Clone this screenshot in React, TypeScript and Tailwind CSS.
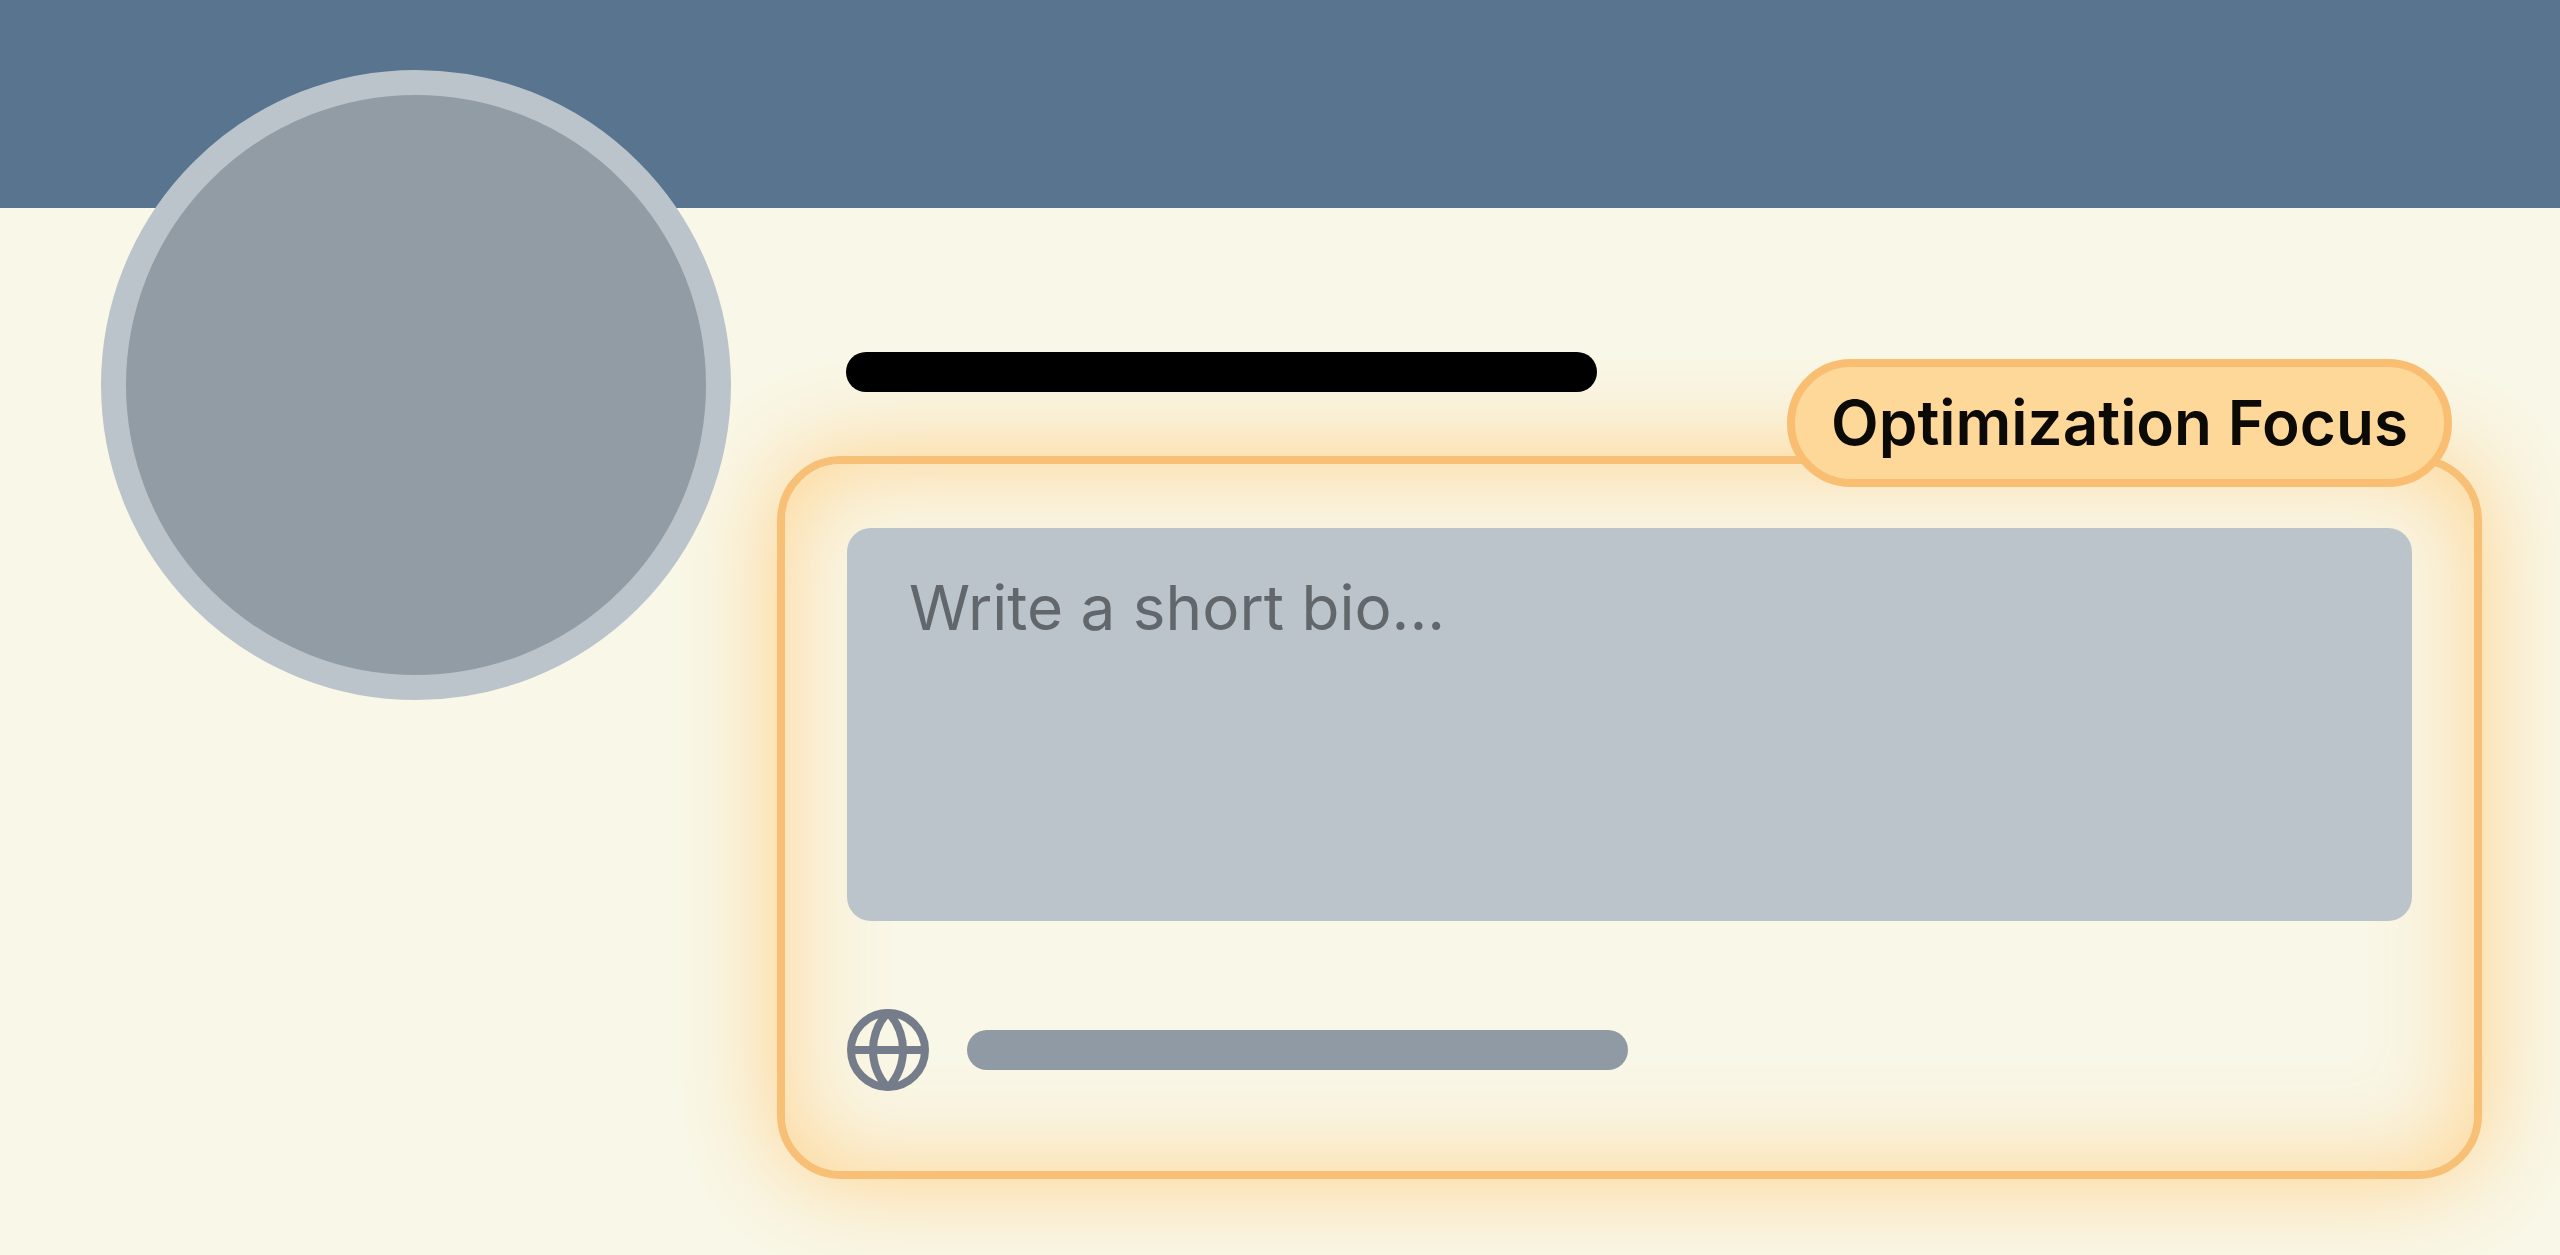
import React from 'react';

const GlobeIcon: React.FC = () => (
  <svg
    className="size-[82px] shrink-0 text-[#757d8a]"
    viewBox="0 0 82 82"
    fill="none"
    stroke="currentColor"
    strokeWidth="8"
    aria-hidden="true"
  >
    <circle cx="41" cy="41" r="37" />
    <path d="M4 41h74" />
    <path d="M41 3C21 25 21 57 41 79M41 3c20 22 20 54 0 76" />
  </svg>
);

const BioCard: React.FC = () => {
  return (
    <section className="relative rounded-[64px] border-8 border-[#f7c076] px-[62px] pt-16 pb-20 shadow-[0_0_100px_rgba(255,208,135,1),inset_0_0_100px_rgba(255,208,135,0.9)]">
      <span className="absolute -top-[105px] right-[22px] rounded-full border-8 border-[#f9be72] bg-[#fdd899] px-9 py-4 text-[62px] leading-[80px] font-semibold whitespace-nowrap text-[#0c0a07]">
        Optimization Focus
      </span>
      <textarea
        aria-label="Bio"
        placeholder="Write a short bio..."
        className="block h-[393px] w-full resize-none rounded-3xl bg-[#bcc4cb] px-[62px] py-10 text-[62px] leading-[80px] text-[#62676c] outline-none placeholder:text-[#62676c]"
      />
      <div className="mt-[88px] flex items-center gap-[38px]">
        <GlobeIcon />
        <div className="h-10 w-[661px] rounded-full bg-[#909aa5]" />
      </div>
    </section>
  );
};

const App: React.FC = () => {
  return (
    <div className="min-h-screen bg-[#f9f7e8] font-['Inter',sans-serif]">
      <header className="h-52 bg-[#58748f]" />
      <main className="flex items-start gap-[46px] pr-[78px] pl-[101px]">
        <div className="relative z-10 -mt-[138px] size-[630px] shrink-0 rounded-full border-[25px] border-[#bbc4cb] bg-[#929ca5]" />
        <div className="min-w-0 flex-1 pt-36">
          <div className="relative z-10 mb-16 ml-[69px] h-10 w-[751px] rounded-full bg-black" />
          <BioCard />
        </div>
      </main>
    </div>
  );
};

export default App;
